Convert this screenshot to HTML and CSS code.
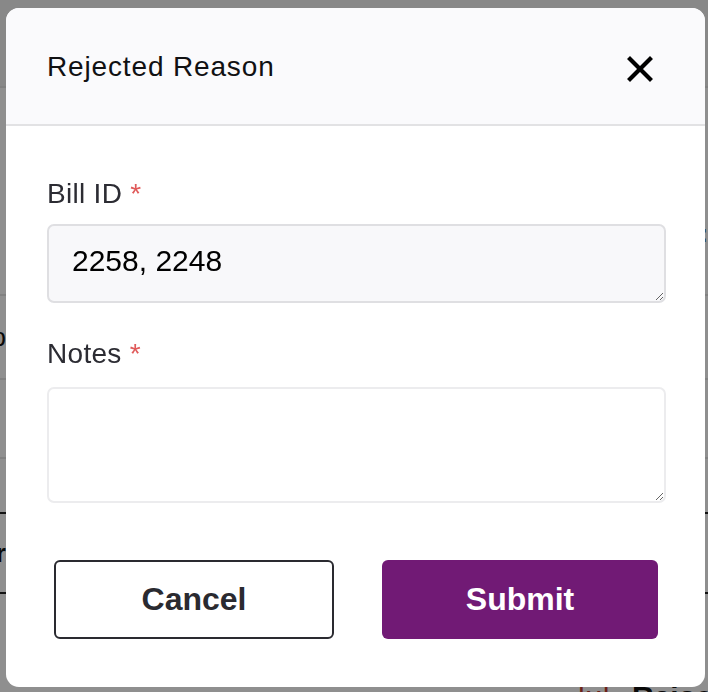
FILE: index.html
```html
<!DOCTYPE html>
<html lang="en">
<head>
<meta charset="utf-8">
<title>Rejected Reason</title>
<link rel="stylesheet" href="styles.css">
</head>
<body>
<div class="page">
  <div class="bg-row r1"></div>
  <div class="bg-row r2"><span class="edge-right">:</span></div>
  <div class="bg-row r3"><span class="edge-left">Ep</span></div>
  <div class="bg-row r4"></div>
  <div class="bg-row r5 dark"></div>
  <div class="bg-row r6 dark"><span class="edge-left bold">Year</span></div>
  <div class="bg-row r7"><span class="raise"><span class="raise-icon">[x]</span> Raise</span></div>
</div>

<div class="overlay">
  <div class="modal">
    <div class="modal-header">
      <h2 class="modal-title">Rejected Reason</h2>
      <button class="close-btn" aria-label="Close">
        <svg width="26" height="26" viewBox="0 0 26 26"><path d="M3 3 L23 23 M23 3 L3 23" stroke="#000" stroke-width="4.2" stroke-linecap="square"/></svg>
      </button>
    </div>
    <div class="modal-body">
      <label class="field-label">Bill ID <span class="req">*</span></label>
      <textarea class="field field-filled" rows="1">2258, 2248</textarea>
      <label class="field-label notes-label">Notes <span class="req">*</span></label>
      <textarea class="field field-notes"></textarea>
    </div>
    <div class="modal-actions">
      <button class="btn btn-cancel">Cancel</button>
      <button class="btn btn-submit">Submit</button>
    </div>
  </div>
</div>
</body>
</html>
```

FILE: styles.css
```css
* { box-sizing: border-box; }
html, body {
  margin: 0;
  padding: 0;
  width: 708px;
  height: 692px;
  overflow: hidden;
  font-family: "Liberation Sans", Arial, Helvetica, sans-serif;
}
body { background: #ffffff; }

/* background page */
.page {
  display: flex;
  flex-direction: column;
  width: 708px;
  overflow: hidden;
}
.bg-row {
  border-bottom: 2px solid #e6e6e6;
  display: flex;
  justify-content: space-between;
  align-items: center;
  font-size: 26px;
  color: #111;
}
.bg-row.dark { border-bottom-color: #222; }
.r1 { height: 88px; background: #f2f2f2; }
.r2 { height: 208px; align-items: flex-start; padding-top: 130px; }
.r3 { height: 84px; }
.r4 { height: 79px; }
.r5 { height: 55px; }
.r6 { height: 80px; }
.r7 {
  height: 98px;
  border-bottom: none;
  align-items: flex-start;
  justify-content: flex-start;
  padding: 86px 0 0 578px;
  overflow: hidden;
}
.edge-left {
  width: 6px;
  overflow: hidden;
  display: flex;
  justify-content: flex-end;
  white-space: nowrap;
}
.edge-left.bold { font-weight: 700; }
.edge-right { margin-left: auto; font-weight: 700; }
.raise {
  white-space: nowrap;
  font-weight: 700;
  font-size: 30px;
  flex: none;
}
.raise-icon { color: #c0392b; font-weight: 400; margin-right: 14px; }

/* overlay + modal */
.overlay {
  position: fixed;
  inset: 0;
  background: rgba(0, 0, 0, 0.44);
  padding: 8px 3px 5px 6px;
}
.modal {
  width: 699px;
  height: 679px;
  background: #ffffff;
  border-radius: 13px;
  overflow: hidden;
  display: flex;
  flex-direction: column;
}
.modal-header {
  height: 118px;
  background: #fafafc;
  border-bottom: 2px solid #e2e2e4;
  display: flex;
  align-items: center;
  justify-content: space-between;
  padding: 2px 52px 0 41px;
}
.modal-title {
  margin: 0;
  font-size: 28px;
  font-weight: 400;
  letter-spacing: 0.85px;
  color: #111113;
}
.close-btn {
  border: none;
  background: none;
  padding: 0;
  width: 26px;
  height: 26px;
  display: flex;
  margin-top: 4px;
}

.modal-body {
  padding: 52px 39px 0 41px;
  display: flex;
  flex-direction: column;
}
.field-label {
  font-size: 28px;
  line-height: 32px;
  color: #2c2c33;
  letter-spacing: 0.3px;
}
.req { color: #e05a5a; }
.notes-label { margin-top: 35px; }
.field {
  margin-top: 14px;
  width: 619px;
  border-radius: 7px;
  font-family: "Liberation Sans", Arial, Helvetica, sans-serif;
  font-size: 30px;
  color: #000;
  outline: none;
  resize: vertical;
}
.field-filled {
  height: 79px;
  background: #f8f8fa;
  border: 2px solid #dfdfe2;
  padding: 18px 23px 8px;
  line-height: 34px;
}
.field-notes {
  margin-top: 17px;
  height: 116px;
  background: #ffffff;
  border: 2px solid #ececee;
  padding: 13px 23px;
}

.modal-actions {
  display: flex;
  gap: 48px;
  padding: 57px 47px 0 48px;
}
.btn {
  flex: 1 1 0;
  min-width: 0;
  height: 79px;
  border-radius: 6px;
  font-family: "Liberation Sans", Arial, Helvetica, sans-serif;
  font-size: 32px;
  font-weight: 700;
  cursor: pointer;
}
.btn-cancel {
  background: #ffffff;
  border: 2px solid #2a2a30;
  color: #2a2a30;
}
.btn-submit {
  background: #711a75;
  border: none;
  color: #ffffff;
}
```
